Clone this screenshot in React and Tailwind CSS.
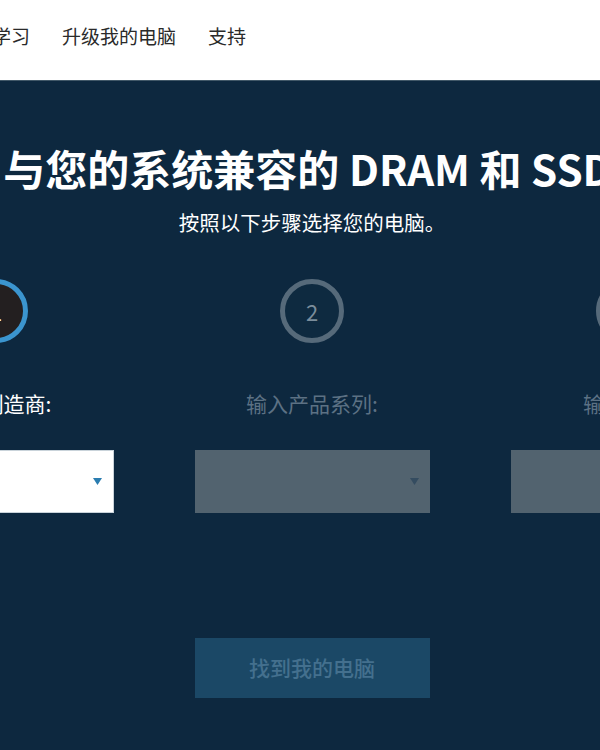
import React from 'react';

const steps = [
  { num: 1, label: '输入制造商:', active: true },
  { num: 2, label: '输入产品系列:', active: false },
  { num: 3, label: '输入型号:', active: false },
];

const Caret = ({ className }) => (
  <svg width="9" height="7" viewBox="0 0 9 7" className={className}>
    <path d="M0 0 H9 L4.5 7 Z" fill="currentColor" />
  </svg>
);

const Step = ({ num, label, active }) => (
  <div className="w-[316px] flex flex-col items-center">
    <div
      className={
        active
          ? 'w-[64px] h-[64px] rounded-full border-[5px] border-[#3b95cf] bg-[#231f20] flex items-center justify-center text-white text-[22px]'
          : 'w-[64px] h-[64px] rounded-full border-[5px] border-[#566a7a] bg-[#0e2a40] flex items-center justify-center text-[#7b8d9b] text-[22px]'
      }
    >
      {num}
    </div>
    <div
      className={
        active
          ? 'mt-[46px] text-[21px] leading-[28px] text-white'
          : 'mt-[46px] text-[21px] leading-[28px] text-[#5c7184]'
      }
    >
      {label}
    </div>
    {active ? (
      <div className="mt-[33px] w-[235px] h-[63px] bg-white border border-[#c9d3da] flex items-center justify-end pr-[11px]">
        <Caret className="text-[#2b7db0]" />
      </div>
    ) : (
      <div className="mt-[33px] w-[235px] h-[63px] bg-[#52636f] flex items-center justify-end pr-[11px]">
        <Caret className="text-[#344c60]" />
      </div>
    )}
  </div>
);

export default function App() {
  return (
    <div
      className="w-[600px] h-[750px] overflow-hidden flex flex-col bg-[#0d283f]"
      style={{ fontFamily: '"Noto Sans CJK SC", "Noto Sans", sans-serif' }}
    >
      <header className="h-[81px] shrink-0 bg-white border-b border-[#415868] flex items-center">
        <nav className="flex items-center gap-[32px] ml-[-8px] mt-[-7px] text-[19px] text-[#2a2a2a]">
          <span>学习</span>
          <span>升级我的电脑</span>
          <span>支持</span>
        </nav>
      </header>

      <main className="flex-1 bg-[#0d283f]">
        <div className="w-[948px] ml-[-162px] flex flex-col items-center pt-[62px]">
          <h1 className="pr-[8px] text-[42px] leading-[50px] font-bold text-white whitespace-nowrap">
            与您的系统兼容的 DRAM 和 SSD
          </h1>
          <p className="mt-[15px] text-[20.5px] leading-[28px] text-white">
            按照以下步骤选择您的电脑。
          </p>

          <div className="mt-[43px] flex">
            {steps.map((s) => (
              <Step key={s.num} {...s} />
            ))}
          </div>

          <button className="mt-[125px] w-[235px] h-[60px] bg-[#1b4866] text-[#44708e] text-[21px] font-medium">
            找到我的电脑
          </button>
        </div>
      </main>
    </div>
  );
}
